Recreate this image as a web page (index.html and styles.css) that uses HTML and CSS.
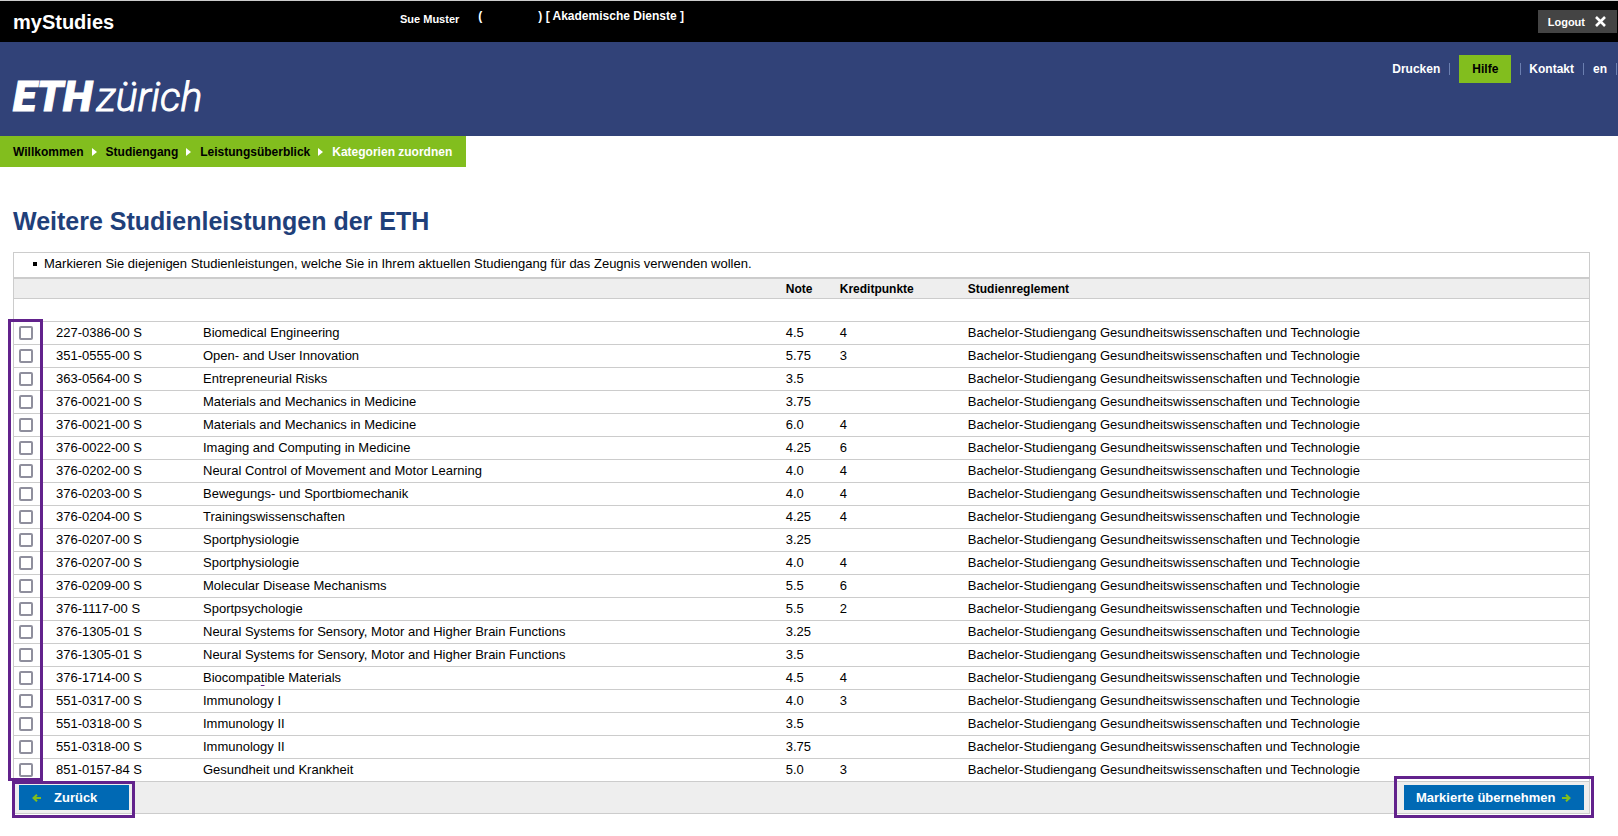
FILE: index.html
```html
<!DOCTYPE html>
<html lang="de">
<head>
<meta charset="utf-8">
<title>myStudies</title>
<link rel="stylesheet" href="styles.css">
</head>
<body>
<header>
  <div class="topbar">
    <div class="app-name">myStudies</div>
    <div class="user"><span class="user-name">Sue Muster</span><span class="user-id"><span>(</span><span>) [ Akademische Dienste ]</span></span></div>
    <button class="logout" type="button">Logout
      <svg width="11" height="11" viewBox="0 0 11 11" aria-hidden="true"><path d="M1 1L10 10M10 1L1 10" stroke="#fff" stroke-width="2.6"/></svg>
    </button>
  </div>
  <div class="banner">
    <a class="logo" href="#"><span class="logo-eth">ETH</span><span class="logo-city">zürich</span></a>
    <nav class="meta">
      <a href="#">Drucken</a>
      <a class="help" href="#">Hilfe</a>
      <a href="#">Kontakt</a>
      <a href="#">en</a>
    </nav>
  </div>
</header>
<nav class="crumbs">
  <a href="#">Willkommen</a>
  <a href="#">Studiengang</a>
  <a href="#">Leistungsüberblick</a>
  <a class="current" href="#">Kategorien zuordnen</a>
</nav>
<main>
  <h1>Weitere Studienleistungen der ETH</h1>
  <form class="panel">
    <ul class="hint"><li>Markieren Sie diejenigen Studienleistungen, welche Sie in Ihrem aktuellen Studiengang für das Zeugnis verwenden wollen.</li></ul>
    <table>
      <colgroup><col class="c-check"><col class="c-code"><col class="c-title"><col class="c-note"><col class="c-points"><col></colgroup>
      <thead>
        <tr><th></th><th></th><th></th><th>Note</th><th>Kreditpunkte</th><th>Studienreglement</th></tr>
      </thead>
      <tbody id="rows">
        <tr><td colspan="6"></td></tr>
      </tbody>
    </table>
    <div class="actions">
      <button type="button" class="back"><svg width="9" height="8" viewBox="0 0 9 8" aria-hidden="true"><path d="M9 4H1.5M5 .7L1.5 4L5 7.3" fill="none" stroke="#82be1e" stroke-width="2"/></svg>Zurück</button>
      <button type="button" class="apply">Markierte übernehmen<svg width="9" height="8" viewBox="0 0 9 8" aria-hidden="true"><path d="M0 4H7.5M4 .7L7.5 4L4 7.3" fill="none" stroke="#82be1e" stroke-width="2"/></svg></button>
    </div>
    <div class="mark mark-checks"></div>
    <div class="mark mark-back"></div>
    <div class="mark mark-apply"></div>
  </form>
</main>
<script src="rows.js"></script>
</body>
</html>
```
FILE: rows.js
```js
const rows = [
  ["227-0386-00 S", "Biomedical Engineering", "4.5", "4"],
  ["351-0555-00 S", "Open- and User Innovation", "5.75", "3"],
  ["363-0564-00 S", "Entrepreneurial Risks", "3.5", ""],
  ["376-0021-00 S", "Materials and Mechanics in Medicine", "3.75", ""],
  ["376-0021-00 S", "Materials and Mechanics in Medicine", "6.0", "4"],
  ["376-0022-00 S", "Imaging and Computing in Medicine", "4.25", "6"],
  ["376-0202-00 S", "Neural Control of Movement and Motor Learning", "4.0", "4"],
  ["376-0203-00 S", "Bewegungs- und Sportbiomechanik", "4.0", "4"],
  ["376-0204-00 S", "Trainingswissenschaften", "4.25", "4"],
  ["376-0207-00 S", "Sportphysiologie", "3.25", ""],
  ["376-0207-00 S", "Sportphysiologie", "4.0", "4"],
  ["376-0209-00 S", "Molecular Disease Mechanisms", "5.5", "6"],
  ["376-1117-00 S", "Sportpsychologie", "5.5", "2"],
  ["376-1305-01 S", "Neural Systems for Sensory, Motor and Higher Brain Functions", "3.25", ""],
  ["376-1305-01 S", "Neural Systems for Sensory, Motor and Higher Brain Functions", "3.5", ""],
  ["376-1714-00 S", "Biocompa<u>t</u>ible Materials", "4.5", "4"],
  ["551-0317-00 S", "Immunology I", "4.0", "3"],
  ["551-0318-00 S", "Immunology II", "3.5", ""],
  ["551-0318-00 S", "Immunology II", "3.75", ""],
  ["851-0157-84 S", "Gesundheit und Krankheit", "5.0", "3"]
];
const program = "Bachelor-Studiengang Gesundheitswissenschaften und Technologie";
const body = document.getElementById("rows");
rows.forEach(([code, title, grade, points], i) => {
  const tr = body.insertRow();
  tr.innerHTML = `<td><input type="checkbox" id="c${i}"></td><td><label for="c${i}">${code}</label></td>` +
    `<td>${title}</td><td>${grade}</td><td>${points}</td><td>${program}</td>`;
});
```
FILE: styles.css
```css
* { box-sizing: border-box; }
body { margin: 0; background: #fff; color: #000; font: 13px/16px "Liberation Sans", Arial, sans-serif; }
a { color: inherit; text-decoration: none; }
u { text-decoration-color: #62228c; text-underline-offset: 3px; }
button { font: inherit; border: 0; cursor: pointer; }

.topbar { display: flex; background: #000; color: #fff; border-top: 1px solid #ccc; height: 42px; padding-right: 1px; font-weight: bold; }
.app-name { width: 400px; padding: 10px 0 0 13px; font-size: 20px; line-height: 22px; }
.user { flex: 1; display: flex; gap: 19px; font-size: 12px; }
.user-name { padding-top: 10px; font-size: 11px; }
.user-id { display: flex; gap: 56px; padding-top: 7px; }
.logout { display: flex; align-items: center; gap: 10px; align-self: flex-start; margin-top: 9px; height: 23px; padding: 0 11px 0 10px; background: #444; color: #fff; font-size: 11px; font-weight: bold; }

.banner { display: flex; justify-content: space-between; height: 94px; background: #314278; color: #fff; }
.logo { display: flex; align-items: baseline; gap: 4px; padding: 30px 0 0 13px; font-family: Roboto, sans-serif; font-style: italic; line-height: 48px; }
.logo-eth { font-size: 43px; font-weight: 900; -webkit-text-stroke: 1px #fff; }
.logo-city { font-size: 41px; font-weight: 300; -webkit-text-stroke: 1px #fff; }
.meta { display: flex; align-items: flex-start; padding: 13px 1px 0 0; font-size: 12px; line-height: 28px; font-weight: bold; }
.meta a { display: flex; align-items: center; }
.meta a::after { content: ""; width: 1px; height: 12px; margin: 0 9px; background: #6b7fb0; }
.meta a:last-child::after { margin-right: 0; }
.meta .help { position: relative; padding: 0 13px; margin-right: 18px; background: #82be1e; color: #000; }
.meta .help::after { position: absolute; left: 100%; }

.crumbs { display: flex; width: fit-content; padding: 1px 14px 0 13px; background: #82be1e; font-size: 12px; line-height: 30px; font-weight: bold; }
.crumbs a { display: flex; align-items: center; }
.crumbs a + a::before { content: ""; margin: 0 9px 0 8px; border: solid transparent; border-width: 4px 0 4px 5px; border-left-color: #fff; }
.crumbs .current { color: #fff; }

main { padding: 39px 28px 18px 13px; }
h1 { margin: 0 0 16px; color: #1f407a; font-size: 25px; line-height: 30px; }
.panel { position: relative; border: 1px solid #ccc; }
.hint { list-style: none; margin: 0; padding: 3px 0 5px 19px; border-bottom: 1px solid #ccc; }
.hint li { display: flex; align-items: center; gap: 7px; }
.hint li::before { content: ""; width: 4px; height: 4px; background: #000; }
table { width: 100%; table-layout: fixed; border-collapse: collapse; }
.c-check { width: 42px; }
.c-code { width: 147px; }
.c-title { width: 37%; }
.c-note { width: 54px; }
.c-points { width: 128px; }
th, td { padding: 0; text-align: left; white-space: nowrap; }
th { height: 20px; background: #eee; border: solid #ccc; border-width: 1px 0; font-size: 12px; line-height: 14px; }
td { height: 23px; border-bottom: 1px solid #ccc; }
td input { display: block; appearance: none; width: 14px; height: 14px; margin: 0 0 0 5px; border: 2px solid #8f8f9d; border-radius: 2px; background: #fff; }
.actions { display: flex; justify-content: space-between; padding: 3px 5px 3px 5px; background: #eee; }
.actions button { display: flex; align-items: center; height: 25px; background: #0069b4; color: #fff; font-weight: bold; }
.back { width: 110px; gap: 13px; padding: 0 13px; }
.apply { justify-content: space-between; width: 180px; padding: 0 13px 0 12px; }

.mark { position: absolute; border: 3px solid #62228c; pointer-events: none; }
.mark-checks { left: -6px; top: 66px; bottom: 32px; width: 35px; }
.mark-back { left: -2px; bottom: -5px; width: 123px; height: 37px; }
.mark-apply { right: -5px; bottom: -5px; width: 200px; height: 42px; }
```
